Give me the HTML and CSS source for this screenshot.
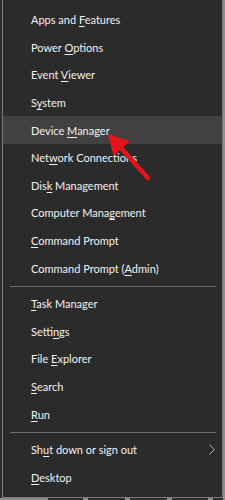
FILE: index.html
```html
<!DOCTYPE html>
<html>
<head>
<meta charset="utf-8">
<link rel="stylesheet" href="styles.css">
</head>
<body>
<div class="screen">
  <div class="menu">
    <ul class="group">
      <li class="item"><span class="label">Apps and <u>F</u>eatures</span></li>
      <li class="item"><span class="label">Power <u>O</u>ptions</span></li>
      <li class="item"><span class="label">Event <u>V</u>iewer</span></li>
      <li class="item"><span class="label">S<u>y</u>stem</span></li>
      <li class="item active"><span class="label">Device <u>M</u>anager</span></li>
      <li class="item"><span class="label">Net<u>w</u>ork Connections</span></li>
      <li class="item"><span class="label">Dis<u>k</u> Management</span></li>
      <li class="item"><span class="label">Computer Mana<u>g</u>ement</span></li>
      <li class="item"><span class="label"><u>C</u>ommand Prompt</span></li>
      <li class="item"><span class="label">Command Prompt (<u>A</u>dmin)</span></li>
    </ul>
    <div class="sep"></div>
    <ul class="group">
      <li class="item"><span class="label"><u>T</u>ask Manager</span></li>
      <li class="item"><span class="label">Setti<u>n</u>gs</span></li>
      <li class="item"><span class="label">File <u>E</u>xplorer</span></li>
      <li class="item"><span class="label"><u>S</u>earch</span></li>
      <li class="item"><span class="label"><u>R</u>un</span></li>
    </ul>
    <div class="sep"></div>
    <ul class="group">
      <li class="item sub"><span class="label">Sh<u>u</u>t down or sign out</span>
        <svg class="chev" width="6" height="11" viewBox="0 0 6 11"><path d="M0.5 0.5 L5.2 5.5 L0.5 10.5" fill="none" stroke="#b8b0b0" stroke-width="1"/></svg>
      </li>
      <li class="item"><span class="label"><u>D</u>esktop</span></li>
    </ul>
  </div>
  <div class="taskbar">
    <span class="blk b1"></span><span class="blk b2"></span><span class="blk b3"></span><span class="blk b4"></span><span class="blk b5"></span>
  </div>
  <svg class="arrow" width="225" height="500" viewBox="0 0 225 500">
    <line x1="121" y1="148" x2="148" y2="178" stroke="#e3151b" stroke-width="4.5" stroke-linecap="round"/>
    <polygon points="108,134 113.5,156 130,141" fill="#e3151b"/>
  </svg>
</div>
</body>
</html>
```

FILE: styles.css
```css
html, body {
  margin: 0;
  padding: 0;
  width: 225px;
  height: 500px;
  overflow: hidden;
  background: #2b2b2b;
}
.screen {
  position: relative;
  width: 225px;
  height: 500px;
  background: linear-gradient(to right, #2b2b2b 0, #2b2b2b 223px, #8c8c8c 223px);
}
.menu {
  margin-left: 2px;
  width: 221px;
  height: 498px;
  box-sizing: border-box;
  border-left: 1px solid #7a7a7a;
  border-right: 1px solid #7a7a7a;
  border-bottom: 1px solid #7a7a7a;
  background: #2b2b2b;
  padding-top: 6px;
  font-family: "Lato", "Open Sans", sans-serif;
  font-size: 11px;
  color: #f2f2f2;
}
.group {
  list-style: none;
  margin: 0;
  padding: 0;
}
.item {
  height: 27.6px;
  display: flex;
  align-items: center;
  padding-left: 28px;
  padding-right: 7px;
  white-space: nowrap;
}
.label {
  white-space: pre;
}
.item u {
  text-decoration: underline;
  text-underline-offset: 1.5px;
  text-decoration-thickness: 1px;
}
.active {
  background: #414141;
}
.sub {
  justify-content: space-between;
}
.chev {
  display: block;
}
.sep {
  height: 1px;
  background: #6e6e6e;
  margin: 4px 6px 3px 7px;
}
.taskbar {
  height: 2px;
  background: #8c8c8c;
  position: relative;
}
.blk {
  position: absolute;
  top: 0;
  height: 2px;
  background: #2b2b2b;
}
.b1 { left: 48px; width: 35px; }
.b2 { left: 88px; width: 37px; }
.b3 { left: 130px; width: 37px; }
.b4 { left: 172px; width: 36px; }
.b5 { left: 213px; width: 10px; }
.arrow {
  position: absolute;
  left: 0;
  top: 0;
  pointer-events: none;
}
```
